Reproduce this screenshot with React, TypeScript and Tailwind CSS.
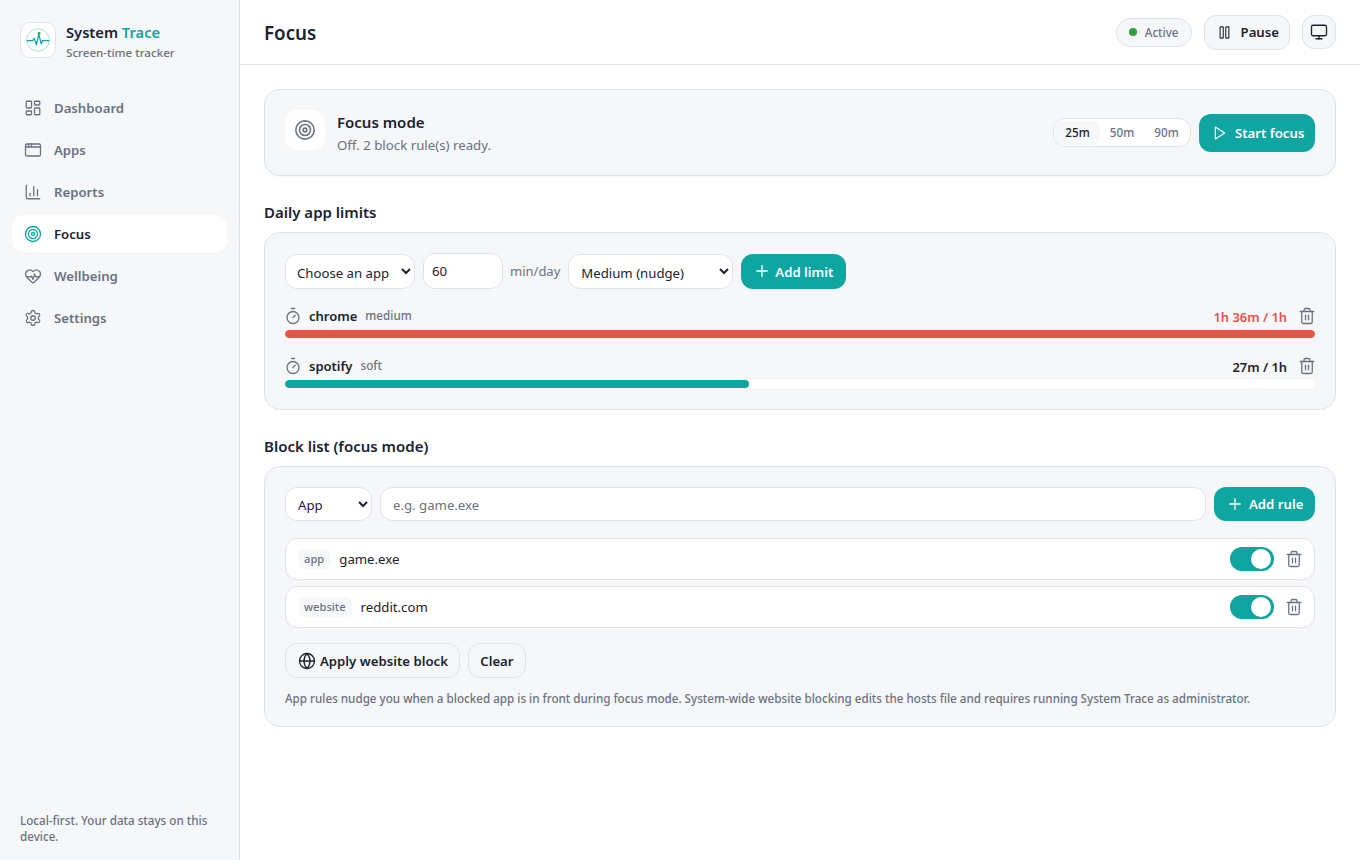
import React from "react";
import {
  AppWindow,
  ChartColumn,
  Globe,
  HeartPulse,
  LayoutDashboard,
  Monitor,
  Pause,
  Plus,
  Settings,
  Target,
  Timer,
  Trash2,
} from "lucide-react";

const nav = [
  { label: "Dashboard", icon: LayoutDashboard },
  { label: "Apps", icon: AppWindow },
  { label: "Reports", icon: ChartColumn },
  { label: "Focus", icon: Target, active: true },
  { label: "Wellbeing", icon: HeartPulse },
  { label: "Settings", icon: Settings },
];

const Logo = () => (
  <svg width="26" height="26" viewBox="0 0 24 24" fill="none">
    <circle cx="12" cy="12" r="10.4" stroke="#a6e0da" strokeWidth="0.9" />
    <path
      d="M1.5 12.5h5.5l1.5-2 2 6 2.2-10 2.3 9 1.2-3h6.3"
      stroke="#0fa5a0"
      strokeWidth="1.2"
      strokeLinejoin="round"
    />
    <circle cx="13" cy="5.8" r="1.3" fill="#2f9e44" />
  </svg>
);

const PlayIcon = () => (
  <svg width="16" height="16" viewBox="0 0 24 24" fill="none" stroke="currentColor" strokeWidth="1.75" strokeLinejoin="round">
    <polygon points="5 3 19 12 5 21" />
  </svg>
);

const Sidebar = () => (
  <aside className="w-[240px] shrink-0 h-full bg-[#f6f7f9] border-r border-[#dfe3ea] flex flex-col">
    <div className="flex items-center gap-[10px] pl-5 pt-[22px] h-[73px] pb-[15px]">
      <div className="w-9 h-9 rounded-[10px] bg-white border border-[#dfe3ea] flex items-center justify-center">
        <Logo />
      </div>
      <div className="mt-[3px]">
        <div className="text-[14.7px] leading-[20px] font-semibold text-[#1b2230]">
          System <span className="text-[#0fa5a0]">Trace</span>
        </div>
        <div className="text-[11.6px] leading-[16px] font-medium text-[#6b7280] mt-[3px]">Screen-time tracker</div>
      </div>
    </div>
    <nav className="mt-[16px] px-3 flex flex-col gap-[5px] flex-1">
      {nav.map((n) => (
        <div
          key={n.label}
          className={`h-[37px] rounded-[12px] flex items-center gap-[12px] pl-[12px] text-[13.2px] font-semibold ${
            n.active ? "bg-white text-[#1b2230]" : "text-[#6b7280]"
          }`}
        >
          <n.icon size={18} strokeWidth={1.75} className={n.active ? "text-[#0fa5a0]" : "text-[#6b7280]"} />
          <span className="mt-[2px]">{n.label}</span>
        </div>
      ))}
    </nav>
    <div className="px-5 pb-[15px] text-[11.65px] leading-[16px] font-medium text-[#6b7280]">
      Local-first. Your data stays on this device.
    </div>
  </aside>
);

const inputCls =
  "rounded-[12px] border border-[#dfe3ea] bg-white text-[13.2px] text-[#1b2230] outline-none";

const PrimaryButton = ({ icon, label, layout, textCls }: { icon: React.ReactNode; label: string; layout: string; textCls: string }) => (
  <button
    className={`${layout} rounded-[12px] bg-[#0fa5a0] text-white text-[13.2px] font-semibold flex items-center shrink-0`}
  >
    {icon}
    <span className={textCls}>{label}</span>
  </button>
);

const LimitRow = ({
  name,
  level,
  usage,
  pct,
  over,
}: {
  name: string;
  level: string;
  usage: string;
  pct: number;
  over?: boolean;
}) => (
  <div>
    <div className="flex items-center h-[20px]">
      <Timer size={18} strokeWidth={1.75} className="text-[#6b7280] ml-[-1px] mr-[7px]" />
      <span className="text-[13px] font-semibold text-[#1b2230] mr-2 mt-[2px]">{name}</span>
      <span className="text-[11.65px] font-medium text-[#6b7280] mb-[1px]">{level}</span>
      <span className={`ml-auto text-[12.9px] font-semibold mt-[3px] ${over ? "text-[#e5534b]" : "text-[#1b2230]"}`}>{usage}</span>
      <Trash2 size={18} strokeWidth={1.75} className="text-[#6b7280] ml-[11px] mr-[-1px]" />
    </div>
    <div className="mt-[4px] h-[8px] rounded-full bg-white overflow-hidden">
      <div className={`h-full rounded-full ${over ? "bg-[#e5534b]" : "bg-[#0fa5a0]"}`} style={{ width: `${pct}%` }} />
    </div>
  </div>
);

const RuleRow = ({ kind, value }: { kind: string; value: string }) => (
  <div className="h-[42px] rounded-[12px] border border-[#dfe3ea] bg-white flex items-center pl-3 pr-[11px] gap-[9px]">
    <span className="h-[20px] px-[6px] rounded-[6px] bg-[#f6f7f9] text-[11.2px] font-medium text-[#6b7280] flex items-center">
      {kind}
    </span>
    <span className="text-[13.2px] text-[#1b2230] mt-[2px]">{value}</span>
    <div className="ml-auto w-[44px] h-[24px] rounded-full bg-[#0fa5a0] relative">
      <span className="absolute right-[3px] top-[2px] w-[20px] h-[20px] rounded-full bg-white" />
    </div>
    <Trash2 size={18} strokeWidth={1.75} className="text-[#6b7280] ml-[2px]" />
  </div>
);

export default function App() {
  return (
    <div
      className="w-[1360px] h-[860px] flex bg-white overflow-hidden"
      style={{ fontFamily: '"Noto Sans", sans-serif' }}
    >
      <Sidebar />
      <main className="flex-1 min-w-0 flex flex-col">
        <header className="h-[65px] border-b border-[#dfe3ea] flex items-center px-6">
          <h1 className="text-[18.8px] font-semibold text-[#1b2230] mt-[2px]">Focus</h1>
          <div className="ml-auto flex items-center gap-3">
            <div className="h-[29px] rounded-full border border-[#dfe3ea] bg-[#f6f7f9] flex items-center gap-[8px] px-3 text-[11.65px] font-medium text-[#6b7280]">
              <span className="w-2 h-2 rounded-full bg-[#2f9e44]" />
              <span className="mt-[2px]">Active</span>
            </div>
            <button className="h-[35px] rounded-[12px] border border-[#dfe3ea] bg-[#f6f7f9] flex items-center gap-[9px] pl-3 pr-[10px] text-[13.2px] font-semibold text-[#1b2230]">
              <Pause size={15} strokeWidth={1.75} />
              <span className="mt-[2px]">Pause</span>
            </button>
            <button className="w-[34px] h-[34px] rounded-[12px] border border-[#dfe3ea] bg-[#f6f7f9] flex items-center justify-center text-[#1b2230]">
              <Monitor size={18} strokeWidth={1.75} />
            </button>
          </div>
        </header>

        <div className="px-6 pt-6">
          <section className="h-[87px] rounded-[16px] border border-[#dfe3ea] bg-[#f6f7f9] flex items-center pl-5 pr-5 shadow-[0_1px_2px_rgba(0,0,0,0.04)]">
            <div className="w-10 h-10 rounded-[12px] bg-white flex items-center justify-center text-[#6b7280] mt-[-6px]">
              <Target size={22} strokeWidth={1.75} />
            </div>
            <div className="ml-3">
              <div className="text-[15px] leading-[20px] font-semibold text-[#1b2230]">Focus mode</div>
              <div className="text-[13.25px] leading-[18px] text-[#6b7280] mt-[4px]">Off. 2 block rule(s) ready.</div>
            </div>
            <div className="ml-auto flex items-center gap-2">
              <div className="h-[29px] rounded-[12px] border border-[#dfe3ea] bg-white flex items-center px-[1px] text-[11.65px] font-medium text-[#6b7280]">
                <span className="h-[24px] w-[45px] pt-[1px] justify-center rounded-[8px] bg-[#f6f7f9] text-[#1b2230] flex items-center">25m</span>
                <span className="h-[24px] w-[44px] pt-[1px] justify-center flex items-center">50m</span>
                <span className="h-[24px] w-[45px] pt-[1px] justify-center flex items-center">90m</span>
              </div>
              <PrimaryButton
                icon={<PlayIcon />}
                label="Start focus"
                layout="h-[38px] w-[116px] pl-[13px] gap-[7px]"
                textCls="mt-[2px]"
              />
            </div>
          </section>

          <h2 className="mt-[26px] text-[15px] leading-[20px] font-semibold text-[#1b2230]">Daily app limits</h2>
          <section className="mt-[10px] rounded-[16px] border border-[#dfe3ea] bg-[#f6f7f9] px-5 pt-5 pb-[21px] flex flex-col">
            <div className="flex items-center gap-2">
              <select defaultValue="" className={`${inputCls} h-[35px] w-[130px] pl-[7px] pt-[2px] mt-[1px]`}>
                <option value="">Choose an app</option>
              </select>
              <input defaultValue="60" className={`${inputCls} w-[80px] h-[36px] px-2`} />
              <span className="text-[13px] text-[#6b7280] ml-[-1px] mt-[2px]">min/day</span>
              <select className={`${inputCls} h-[35px] w-[165px] pl-2 pt-[2px] mt-[1px]`}>
                <option>Medium (nudge)</option>
              </select>
              <PrimaryButton
                icon={<Plus size={18} strokeWidth={1.75} />}
                label="Add limit"
                layout="h-[35px] w-[105px] pl-3 gap-[4px]"
                textCls="mt-[3px]"
              />
            </div>
            <div className="mt-[17px] flex flex-col gap-[18px]">
              <LimitRow name="chrome" level="medium" usage="1h 36m / 1h" pct={100} over />
              <LimitRow name="spotify" level="soft" usage="27m / 1h" pct={45} />
            </div>
          </section>

          <h2 className="mt-[26px] text-[15px] leading-[20px] font-semibold text-[#1b2230]">Block list (focus mode)</h2>
          <section className="mt-[10px] rounded-[16px] border border-[#dfe3ea] bg-[#f6f7f9] px-5 pt-5 pb-[19px] flex flex-col">
            <div className="flex items-center gap-2">
              <select className={`${inputCls} h-[34px] w-[87px] pl-2 pt-[2px]`}>
                <option>App</option>
              </select>
              <input placeholder="e.g. game.exe" className={`${inputCls} h-[34px] flex-1 px-3 pt-[2px] placeholder:text-[#6b7280]`} />
              <PrimaryButton
                icon={<Plus size={18} strokeWidth={1.75} />}
                label="Add rule"
                layout="h-[34px] w-[101px] pl-3 gap-[5px]"
                textCls="mt-[2px]"
              />
            </div>
            <div className="mt-[17px] flex flex-col gap-[6px]">
              <RuleRow kind="app" value="game.exe" />
              <RuleRow kind="website" value="reddit.com" />
            </div>
            <div className="mt-[15px] flex items-center gap-2">
              <button className="h-[35px] rounded-[12px] border border-[#dfe3ea] bg-[#f6f7f9] flex items-center gap-[4px] pl-3 pr-[11px] text-[13.2px] font-semibold text-[#1b2230]">
                <Globe size={18} strokeWidth={1.75} />
                <span className="mt-[2px]">Apply website block</span>
              </button>
              <button className="h-[35px] w-[58px] rounded-[12px] border border-[#dfe3ea] bg-[#f6f7f9] pt-[2px] text-[13.2px] font-semibold text-[#1b2230]">
                Clear
              </button>
            </div>
            <p className="mt-[13px] text-[11.65px] leading-[16px] font-medium text-[#6b7280]">
              App rules nudge you when a blocked app is in front during focus mode. System-wide website blocking edits the hosts file and requires running System Trace as administrator.
            </p>
          </section>
        </div>
      </main>
    </div>
  );
}
